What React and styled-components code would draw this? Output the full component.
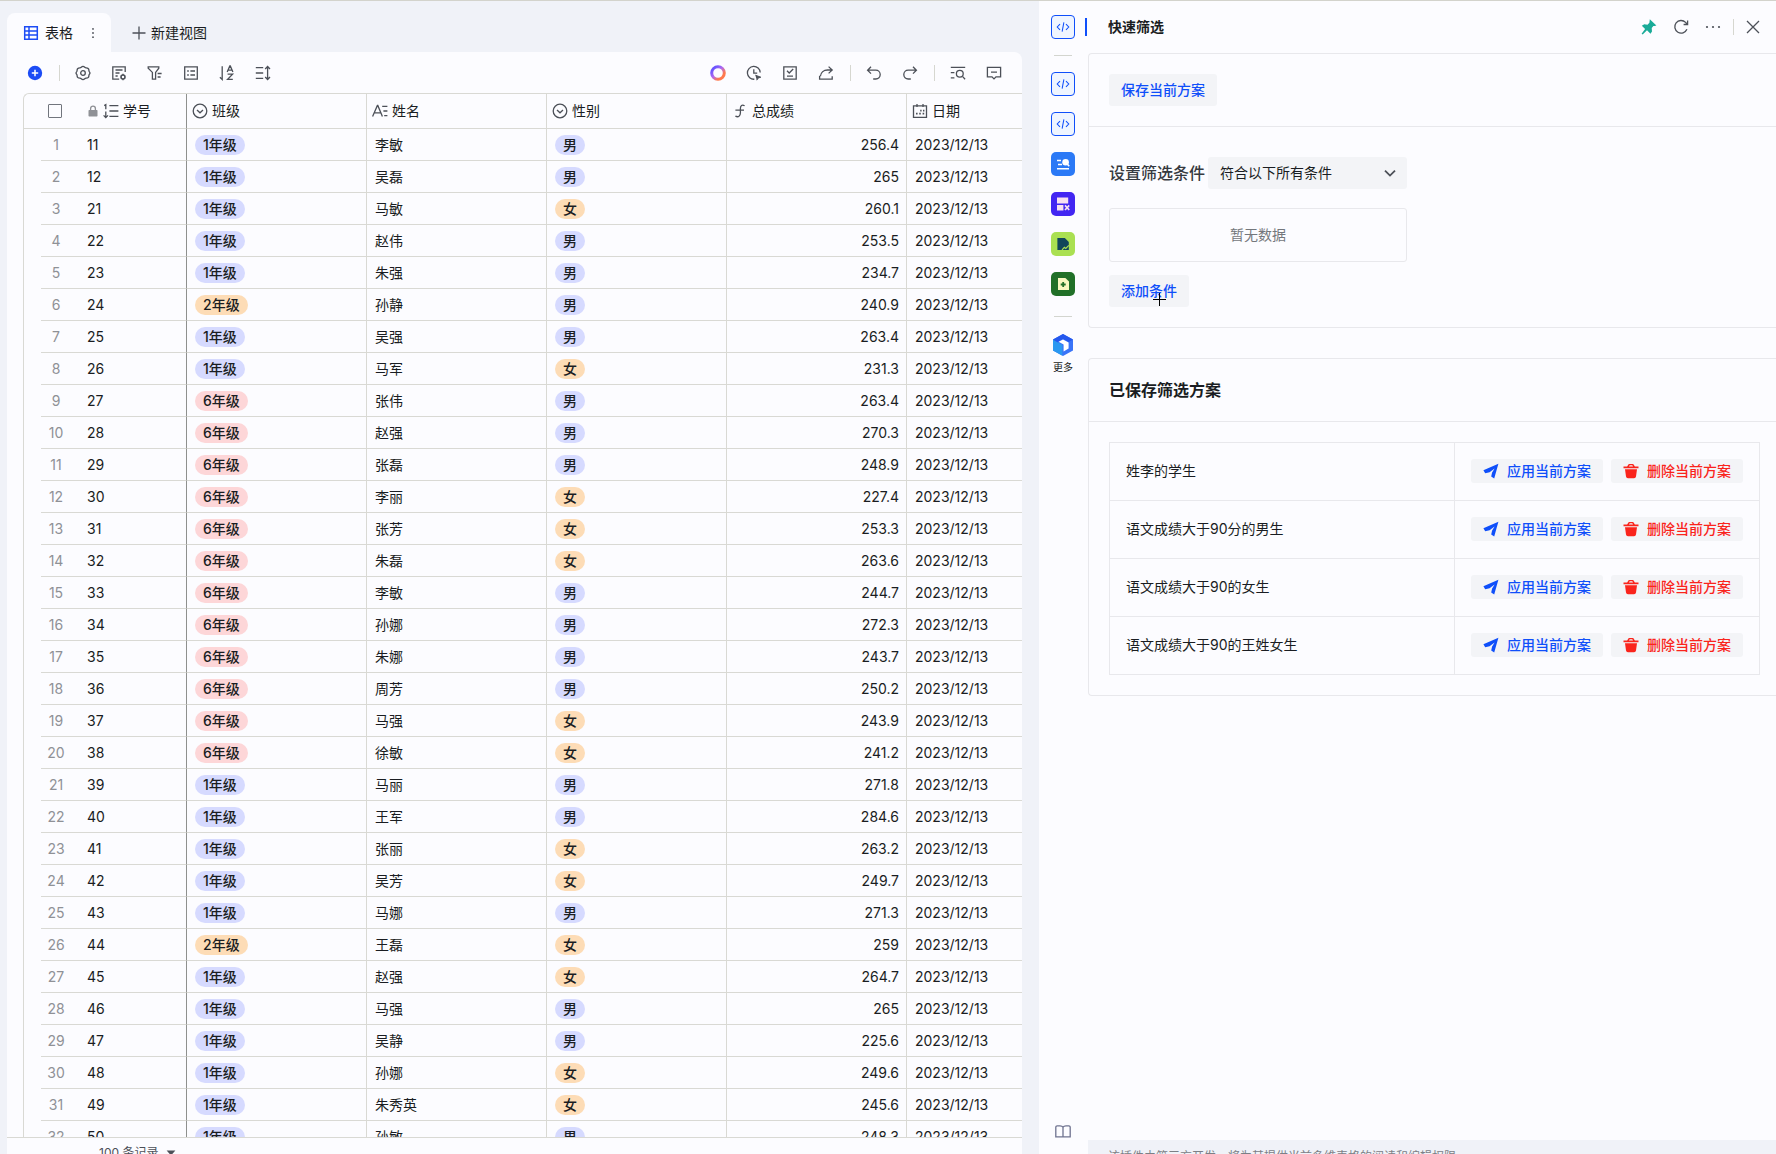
import React from "react";
import styled, { createGlobalStyle } from "styled-components";

const color = {
  surface: "#fcfcff",
  canvas: "#f0f2f8",
  control: "#f3f4f7",
  text: "#1a1d22",
  icon: "#4c5058",
  muted: "#8f9196",
  blue: "#0f4ffa",
  red: "#fa241c",
  grid: "#d9d9d4",
  line: "#e8e8ec",
};

const GlobalStyle = createGlobalStyle`
  * { box-sizing: border-box; }
  body {
    margin: 0;
    color: ${color.text};
    background: ${color.canvas};
    font: 14px/20px Inter, "Noto Sans CJK SC", sans-serif;
  }
  button, select, input { font: inherit; color: inherit; margin: 0; }
  button { border: 0; background: none; padding: 0; cursor: pointer; }
`;

/* ---------- icons ---------- */

const Svg = styled.svg`
  display: block;
  flex: none;
  width: ${(p) => p.$size || 16}px;
  height: ${(p) => p.$size || 16}px;
  fill: none;
  stroke: currentColor;
  stroke-width: ${(p) => p.$weight || 1.3};
  color: ${(p) => p.$color || "inherit"};
`;

const shapes = {
  grid: <path d="M1.7 1.7h12.6v12.6H1.7zM1.7 6h12.6M1.7 10h12.6M6 1.7v12.6" strokeWidth="1.5" />,
  dots: <g fill="currentColor" stroke="none"><circle cx="8" cy="2.5" r="1.2" /><circle cx="8" cy="8" r="1.2" /><circle cx="8" cy="13.5" r="1.2" /></g>,
  more: <g fill="currentColor" stroke="none"><circle cx="2" cy="8" r="1.1" /><circle cx="8" cy="8" r="1.1" /><circle cx="14" cy="8" r="1.1" /></g>,
  plus: <path d="M8 1.5v13M1.5 8h13" />,
  add: <g><circle cx="8" cy="8" r="7.2" fill="#1c4cf5" stroke="none" /><path d="M8 4.8v6.4M4.8 8h6.4" stroke="#fff" strokeWidth="1.5" /></g>,
  gear: <g><path d="M6.300 2.200Q8 .4 9.700 2.200Q10.300 2.900 11.300 2.800Q13.700 2.800 13.900 5Q13.800 6 14.300 6.600Q15.600 8 14.300 9.400Q13.800 10 13.900 11Q13.700 13.200 11.300 13.200Q10.300 13.100 9.700 13.800Q8 15.600 6.300 13.800Q5.700 13.100 4.700 13.200Q2.300 13.200 2.100 11Q2.200 10 1.700 9.400Q.4 8 1.700 6.600Q2.200 6 2.100 5Q2.300 2.800 4.700 2.800Q5.700 2.900 6.300 2.200z" /><circle cx="8" cy="8" r="2.300" /></g>,
  form: <g><path d="M14.2 7V1.8H1.8v12.4h6.4M4.5 5h7M4.5 8h4M4.5 11h2.2" /><circle cx="12" cy="12" r="2" strokeWidth="1.6" /><path d="M12 8.8v1.4M12 13.8v1.4" /></g>,
  filter: <path d="M1.2 1.8h10.6v1.4L8.6 7.4v6.8H5.4V7.4L1.2 3.2zM10.6 8.5h4M10.6 12h3" />,
  list: <path d="M1.7 1.8h12.6v12.4H1.700zM4.2 6h1.6M4.2 10h1.6M7.4 6h4.6M7.4 10h4.6" />,
  sort: <g><path d="M3.2 1.2v13.2L.9 12.2M8.2 7l2.6-6h.5l2.6 6M9 5.2h4M8.6 9.2h5L8.6 14.3h5.2" /></g>,
  height: <path d="M.8 2.6h7.4M.8 8h7.4M.8 13.4h7.4M12.6 1.6v12.8M10.2 4l2.4-2.5L15 4M10.2 12l2.4 2.5L15 12" />,
  clock: <g><path d="M14.200 7.600A6.400 6.400 0 1 0 8.400 14.200M7.800 4.200v4h3.400" /><path d="M9.400 10.200l5.400 2-2.600.8-1.400 2.200" fill="currentColor" strokeWidth="1" /></g>,
  task: <path d="M1.8 1.8h12.4v12.4H1.8zM5 5.8l2.2 2.2L11.2 4M5 11.2h6" />,
  share: <path d="M10.6 1.6l3.6 3.4-3.6 3.4M14 5H9.5C5.8 5 2.7 7.4 2.4 11.3M1.6 10.8v3.4h12.6v-3" />,
  undo: <path d="M5 1.8L1.6 5.2 5 8.6M1.8 5.2h8a4.3 4.3 0 0 1 0 8.8H7.2" />,
  redo: <path d="M11 1.8l3.4 3.4L11 8.6M14.2 5.2h-8a4.3 4.3 0 0 0 0 8.8h2.6" />,
  find: <g><path d="M.8 2.4h14.4M.8 7.6h3.6M.8 12.8h3.6M12.7 11.6l2.4 2.6" /><circle cx="9.8" cy="8.8" r="3.4" /></g>,
  comment: <path d="M1.4 2.4h13.2v9.400H10L8 13.9l-2-2.1H1.4zM5 7.2h6" />,
  lock: <g><rect x="2" y="6.600" width="12" height="8.600" rx="1" fill="currentColor" stroke="none" /><path d="M4.8 7V4.6a3.2 3.2 0 0 1 6.4 0V7" strokeWidth="1.8" /></g>,
  numbered: <path d="M1.2 2.6l1.6-1v4.6M2.8 8.4v6M.6 12.4l2.2 2.2L5 12.4M6.4 2.6h9M6.4 8h9M6.4 13.4h9" />,
  select: <g><circle cx="8" cy="8" r="6.8" /><path d="M5 7l3 2.8L11 7" /></g>,
  text: <path d="M.6 13.6L5.4 2.4h.4l4.6 11.2M2.2 9.8h6.600M10.2 3.4h5.2M11.4 8h4M12.2 12.6h3.2" />,
  formula: <path d="M12.600 2.800c-2.600-1.800-4.200 0-4.200 2.600v4.400c0 3.400-2 4.800-5 3.400M3.400 7.200h8.600" />,
  calendar: <g><path d="M1.5 2.800h13v11.600h-13zM5 1v3M11 1v3" /><path d="M8.2 7.6h1.4M11 7.6h1.4M4 10.6h1.6M7.2 10.6h1.6M10.6 10.6h1.6" strokeWidth="1.7" /></g>,
  code: <path d="M4.6 4.6L1.4 8l3.2 3.4M11.4 4.6L14.6 8l-3.2 3.4M9 2.8L7 13.2" strokeWidth="1.2" />,
  pin: <path d="M8.800.2l6.600 6.400-1.900.5-1.100-.1-1.700 1.900.3 3.600-1.500 2.300-3.500-3.500L1.700 15.600l-1.100-.9 3.500-4.600L.8 6.700l2.500-1.500 3.200.6 1.900-2z" fill="currentColor" stroke="none" />,
  refresh: <path d="M13.9 10.2A6.3 6.3 0 1 1 12.6 3.4l1.6 1.8M14.6 1.6v3.9h-4" />,
  close: <path d="M2 2l12 12M14 2L2 14" />,
  chevron: <path d="M3 5.6L8 10.6l5-5" strokeWidth="1.8" />,
  send: <path d="M15.400.8L11.200 15.600l-3-2 .9-4.200 2.500-4L6.600 9.200 2.200 10.200.4 7.200z" fill="currentColor" stroke="none" />,
  trash: <g fill="currentColor" stroke="none"><path d="M2 6.300h12l-1 7.300a2 2 0 0 1-2 1.700H5a2 2 0 0 1-2-1.700z" /><path d="M.5 3.400h3.600L5.800 1h4.400l1.700 2.400h3.600v1.900H.5zM6 3.400h4L9.300 2.300H6.700z" fillRule="evenodd" /></g>,
  book: <path d="M8 3.2C7.4 2.2 6.4 1.8 5 1.8H2.2c-.8 0-1.4.5-1.4 1.4v9.6h7.2h7.2V3.2c0-.9-.6-1.4-1.4-1.4H11c-1.4 0-2.400.4-3 1.4zM8 3.2v10.4" />,
  caret: <path d="M1 4h14l-7 8z" fill="currentColor" stroke="none" />,
  cross: <path d="M8 1.5v13M1.5 8h13" stroke="#000" strokeWidth="1" shapeRendering="crispEdges" />,
};

const Icon = ({ name, size, tone, weight }) => (
  <Svg viewBox="0 0 16 16" $size={size} $color={tone} $weight={weight} aria-hidden="true">
    {shapes[name]}
  </Svg>
);

const pluginArt = {
  search: (
    <g>
      <rect width="24" height="24" rx="5" fill="#2b79f6" />
      <path d="M6 8.400h4M7 12.400h4M6 16.800h12" stroke="#fff" strokeWidth="1.500" />
      <circle cx="14.600" cy="10.200" r="3.300" fill="#fff" />
      <path d="M16.200 12l2 2.200" stroke="#fff" strokeWidth="1.600" />
    </g>
  ),
  layout: (
    <g>
      <rect width="24" height="24" rx="5" fill="#4226f2" />
      <path d="M6 5.400h11.200v6H6zM6 13h6.400v5.600H6z" fill="#f7e0f0" />
      <path d="M14 13.400l4.200 4.600M18.200 13.400L14 18" stroke="#f7e0f0" strokeWidth="1.600" />
    </g>
  ),
  report: (
    <g>
      <rect width="24" height="24" rx="5" fill="#aae052" />
      <path d="M6.400 6h7.400l4 4v8H6.400z" fill="#10465a" />
      <path d="M11 17.800l2.400-2.400 1.400 1 3-3" stroke="#aae052" strokeWidth="1.200" />
    </g>
  ),
  document: (
    <g>
      <rect width="24" height="24" rx="5" fill="#217028" />
      <path d="M7 6h7.400L18 9.600V18H7z" fill="#f7f8c0" />
      <path d="M12.200 10v5M9.700 12.500h5" stroke="#217028" strokeWidth="1.800" />
    </g>
  ),
};

const PluginIcon = ({ name }) => (
  <Svg viewBox="0 0 24 24" $size={24} aria-hidden="true">
    <g stroke="none">{pluginArt[name]}</g>
  </Svg>
);

const RingIcon = () => (
  <Svg viewBox="0 0 16 16" $size={16} aria-hidden="true">
    <defs>
      <linearGradient id="ring" x1="0" y1="0" x2="1" y2="1">
        <stop offset="0.15" stopColor="#6a55ff" />
        <stop offset="0.45" stopColor="#b06af0" />
        <stop offset="0.75" stopColor="#ff7a4d" />
      </linearGradient>
    </defs>
    <circle cx="8" cy="8" r="6.300" stroke="url(#ring)" strokeWidth="3" />
  </Svg>
);

const HexLogo = () => (
  <Svg viewBox="0 0 24 24" $size={24} aria-hidden="true">
    <g stroke="none">
      <path d="M12 1l10 5.600v11L12 23 2 17.600V6.600z" fill="#3a74f8" />
      <path d="M2 6.600l9.400 5.400v10.700L2 17.600z" fill="#2a98f0" />
      <path d="M2 6.600L12 1l10 5.600-4.400 2.400L12 6 6.400 9.200z" fill="#2558ee" />
      <path d="M7.600 8.800L12 6.400l5.600 3.100v6L12.600 18.600v-7z" fill="#fff" />
    </g>
  </Svg>
);

/* ---------- page frame ---------- */

const Page = styled.div`
  display: flex;
  height: 100vh;
  overflow: hidden;
  border-top: 1px solid #d3d3cc;
`;

const Main = styled.main`
  flex: 1;
  min-width: 0;
  display: flex;
  flex-direction: column;
  padding: 12px 17px 0 7px;
`;

const ViewTabs = styled.nav`
  display: flex;
  flex: none;
  height: 39px;
`;

const ActiveTab = styled.div`
  display: flex;
  align-items: center;
  padding: 0 12px 0 16px;
  border-radius: 8px 8px 0 0;
  background: ${color.surface};
`;

const TabName = styled.button`
  display: flex;
  align-items: center;
  gap: 6px;
`;

const TabMenu = styled.button`
  margin-left: 14px;
  color: ${color.icon};
`;

const NewView = styled.button`
  display: flex;
  align-items: center;
  gap: 4px;
  margin-left: 20px;
`;

const View = styled.section`
  flex: 1;
  min-height: 0;
  display: flex;
  flex-direction: column;
  border-radius: 0 8px 0 0;
  background: ${color.surface};
`;

const Toolbar = styled.div`
  display: flex;
  flex: none;
  align-items: center;
  justify-content: space-between;
  height: 41px;
  padding: 0 16px;
`;

const ToolGroup = styled.div`
  display: flex;
  align-items: center;
  gap: 12px;
`;

const ToolButton = styled.button`
  display: grid;
  place-items: center;
  width: 24px;
  height: 24px;
  color: ${color.icon};
`;

const Divider = styled.span`
  width: 1px;
  height: 16px;
  margin-right: -1px;
  background: #d6d7d0;
`;

const GridFrame = styled.div`
  flex: 1;
  min-height: 0;
  overflow: hidden;
  margin-left: 16px;
  border: solid ${color.grid};
  border-width: 1px 0 0 1px;
  border-radius: 6px 0 0 0;
`;

const DataTable = styled.table`
  width: 100%;
  table-layout: fixed;
  border-collapse: separate;
  border-spacing: 0;
`;

const Col = styled.col`
  width: ${(p) => (p.$width ? `${p.$width}px` : "auto")};
`;

const HeadCell = styled.th`
  height: 35px;
  padding: 0 0 0 ${(p) => p.$inset || 0}px;
  font-weight: 400;
  text-align: left;
  border-bottom: 1px solid ${color.grid};
  border-right: ${(p) => (p.$edge ? `1px solid ${p.$edge}` : 0)};
`;

const HeadLabel = styled.span`
  display: flex;
  align-items: center;
  gap: 4px;
`;

const Cell = styled.td`
  height: 32px;
  padding: 0 ${(p) => (p.$align ? 7 : 8)}px 0 ${(p) => p.$inset || 8}px;
  text-align: ${(p) => p.$align || "left"};
  white-space: nowrap;
  border-bottom: 1px solid ${color.grid};
  border-right: ${(p) => (p.$edge ? `1px solid ${p.$edge}` : 0)};
`;

const IndentCell = styled.td`
  padding: 0;
`;

const IndexCell = styled(Cell)`
  padding: 0;
  text-align: center;
  color: ${color.muted};
`;

const tones = { blue: "#d6daff", orange: "#fddcb6", red: "#fdd6d8" };

const Tag = styled.span`
  display: inline-block;
  height: 20px;
  padding: 0 8px;
  border-radius: 10px;
  font-weight: 500;
  line-height: 20px;
  vertical-align: middle;
  background: ${(p) => tones[p.$tone]};
`;

const CheckBox = styled.input`
  appearance: none;
  width: 14px;
  height: 14px;
  border: 1px solid #71757d;
  border-radius: 1px;
`;

const RecordBar = styled.footer`
  flex: none;
  height: 17px;
  padding-left: 92px;
  overflow: hidden;
  border-top: 1px solid ${color.grid};
`;

const RecordCount = styled.button`
  display: flex;
  align-items: center;
  gap: 8px;
  font-size: 12px;
  line-height: 30px;
  color: ${color.icon};
`;

/* ---------- plugin side bar ---------- */

const Side = styled.aside`
  display: flex;
  flex: none;
  width: 737px;
  background: ${color.surface};
`;

const Rail = styled.nav`
  display: flex;
  flex: none;
  flex-direction: column;
  align-items: center;
  gap: 16px;
  width: 49px;
  padding: 14px 1px 14px 0;
`;

const RailButton = styled.button`
  position: relative;
  display: grid;
  place-items: center;
  width: 24px;
  height: 24px;
`;

const CodeButton = styled(RailButton)`
  border: 1px solid ${color.blue};
  border-radius: 4px;
  color: ${color.blue};
  background: #eff5ff;

  &[aria-current="true"]::after {
    content: "";
    position: absolute;
    top: 2px;
    right: -13px;
    width: 2px;
    height: 18px;
    background: ${color.blue};
  }
`;

const RailLine = styled.span`
  flex: none;
  width: 18px;
  height: 1px;
  margin-top: ${(p) => (p.$spaced ? 4 : 0)}px;
  background: #d3d5cf;
`;

const MoreButton = styled.button`
  display: grid;
  justify-items: center;
  gap: 4px;
  font-size: 10px;
  line-height: 12px;
`;

const HelpButton = styled.button`
  margin-top: auto;
  color: #6f7390;
`;

const Panel = styled.section`
  flex: 1;
  min-width: 0;
  display: flex;
  flex-direction: column;
`;

const PanelHeader = styled.header`
  display: flex;
  flex: none;
  align-items: center;
  justify-content: space-between;
  height: 52px;
  padding: 0 11px 0 20px;
`;

const PanelTitle = styled.h1`
  margin: 0;
  font-size: 14px;
  font-weight: 600;
`;

const PanelActions = styled.div`
  display: flex;
  align-items: center;
  gap: 8px;
`;

const PanelBody = styled.div`
  flex: 1;
  min-height: 0;
  overflow: hidden;
`;

const Card = styled.section`
  margin-bottom: 30px;
  border: 1px solid ${color.line};
  border-right: 0;
  border-radius: 4px 0 0 4px;
`;

const CardHeader = styled.div`
  display: flex;
  align-items: center;
  min-height: ${(p) => (p.$tall ? 73 : 63)}px;
  padding: 0 16px 0 20px;
  border-bottom: 1px solid ${color.line};
`;

const CardTitle = styled.h2`
  margin: 0;
  font-size: 16px;
  font-weight: 600;
`;

const CardBody = styled.div`
  padding: ${(p) => (p.$top ? p.$top : 20)}px 16px 20px 20px;
`;

const ActionButton = styled.button`
  display: inline-flex;
  align-items: center;
  gap: 8px;
  height: ${(p) => (p.$small ? 24 : 32)}px;
  padding: 0 12px;
  border-radius: 3px;
  font-weight: 500;
  white-space: nowrap;
  color: ${(p) => (p.$danger ? color.red : color.blue)};
  background: ${color.control};
`;

const ConditionRow = styled.div`
  display: flex;
  align-items: center;
  gap: 3px;
`;

const ConditionLabel = styled.label`
  font-size: 16px;
  font-weight: 500;
  color: #363a40;
`;

const SelectWrap = styled.span`
  position: relative;
  width: 199px;
  color: ${color.icon};

  svg {
    position: absolute;
    top: 8px;
    right: 9px;
    pointer-events: none;
  }
`;

const Select = styled.select`
  appearance: none;
  width: 100%;
  height: 32px;
  padding: 0 32px 0 12px;
  border: 0;
  border-radius: 3px;
  color: ${color.text};
  background: ${color.control};
`;

const EmptyBox = styled.div`
  display: grid;
  place-items: center;
  width: 298px;
  height: 54px;
  margin: 19px 0 13px;
  border: 1px solid ${color.line};
  border-radius: 3px;
  color: #74777c;
`;

const CursorAnchor = styled.span`
  position: relative;
  display: inline-flex;

  > svg {
    position: absolute;
    top: 16px;
    left: 42px;
  }
`;

const PlanTable = styled.table`
  width: 100%;
  border-collapse: collapse;
`;

const PlanName = styled.td`
  height: 58px;
  padding: 0 16px 2px;
  border: 1px solid ${color.line};
`;

const PlanActions = styled.td`
  width: 305px;
  padding: 0 16px 2px;
  border: 1px solid ${color.line};
`;

const ButtonPair = styled.div`
  display: flex;
  gap: 8px;
`;

const Notice = styled.footer`
  flex: none;
  height: 14px;
  padding: 8px 0 0 20px;
  overflow: hidden;
  font-size: 12px;
  line-height: 18px;
  color: #7c8086;
  background: ${color.canvas};
`;

/* ---------- data ---------- */

const records = [
  ["11", "1年级", "李敏", "男", "256.4"],
  ["12", "1年级", "吴磊", "男", "265"],
  ["21", "1年级", "马敏", "女", "260.1"],
  ["22", "1年级", "赵伟", "男", "253.5"],
  ["23", "1年级", "朱强", "男", "234.7"],
  ["24", "2年级", "孙静", "男", "240.9"],
  ["25", "1年级", "吴强", "男", "263.4"],
  ["26", "1年级", "马军", "女", "231.3"],
  ["27", "6年级", "张伟", "男", "263.4"],
  ["28", "6年级", "赵强", "男", "270.3"],
  ["29", "6年级", "张磊", "男", "248.9"],
  ["30", "6年级", "李丽", "女", "227.4"],
  ["31", "6年级", "张芳", "女", "253.3"],
  ["32", "6年级", "朱磊", "女", "263.6"],
  ["33", "6年级", "李敏", "男", "244.7"],
  ["34", "6年级", "孙娜", "男", "272.3"],
  ["35", "6年级", "朱娜", "男", "243.7"],
  ["36", "6年级", "周芳", "男", "250.2"],
  ["37", "6年级", "马强", "女", "243.9"],
  ["38", "6年级", "徐敏", "女", "241.2"],
  ["39", "1年级", "马丽", "男", "271.8"],
  ["40", "1年级", "王军", "男", "284.6"],
  ["41", "1年级", "张丽", "女", "263.2"],
  ["42", "1年级", "吴芳", "女", "249.7"],
  ["43", "1年级", "马娜", "男", "271.3"],
  ["44", "2年级", "王磊", "女", "259"],
  ["45", "1年级", "赵强", "女", "264.7"],
  ["46", "1年级", "马强", "男", "265"],
  ["47", "1年级", "吴静", "男", "225.6"],
  ["48", "1年级", "孙娜", "女", "249.6"],
  ["49", "1年级", "朱秀英", "女", "245.6"],
  ["50", "1年级", "孙敏", "男", "248.3"],
];

const gradeTone = { "1年级": "blue", "2年级": "orange", "6年级": "red" };

const fields = [
  ["select", "班级"],
  ["text", "姓名"],
  ["select", "性别"],
  ["formula", "总成绩"],
  ["calendar", "日期"],
];

const plans = ["姓李的学生", "语文成绩大于90分的男生", "语文成绩大于90的女生", "语文成绩大于90的王姓女生"];

const Tool = ({ name, label }) => (
  <ToolButton aria-label={label}>
    <Icon name={name} />
  </ToolButton>
);

const frozenEdge = "#8e908e";

function RecordGrid() {
  return (
    <GridFrame>
      <DataTable>
        <colgroup>
          <Col $width={17} />
          <Col $width={30} />
          <Col $width={116} />
          <Col $width={180} />
          <Col $width={180} />
          <Col $width={180} />
          <Col $width={180} />
          <Col />
        </colgroup>
        <thead>
          <tr>
            <HeadCell />
            <HeadCell $inset={7}>
              <HeadLabel>
                <CheckBox type="checkbox" aria-label="全选" />
              </HeadLabel>
            </HeadCell>
            <HeadCell $inset={16} $edge={frozenEdge}>
              <HeadLabel>
                <Icon name="lock" size={12} tone={color.muted} />
                <Icon name="numbered" tone={color.icon} />
                学号
              </HeadLabel>
            </HeadCell>
            {fields.map(([icon, label], i) => (
              <HeadCell key={label} $inset={5} $edge={i < 4 ? color.grid : null}>
                <HeadLabel>
                  <Icon name={icon} tone={color.icon} />
                  {label}
                </HeadLabel>
              </HeadCell>
            ))}
          </tr>
        </thead>
        <tbody>
          {records.map(([id, grade, name, gender, score], i) => (
            <tr key={id}>
              <IndentCell />
              <IndexCell>{i + 1}</IndexCell>
              <Cell $inset={16} $edge={frozenEdge}>{id}</Cell>
              <Cell $edge={color.grid}><Tag $tone={gradeTone[grade]}>{grade}</Tag></Cell>
              <Cell $edge={color.grid}>{name}</Cell>
              <Cell $edge={color.grid}><Tag $tone={gender === "男" ? "blue" : "orange"}>{gender}</Tag></Cell>
              <Cell $edge={color.grid} $align="right">{score}</Cell>
              <Cell>2023/12/13</Cell>
            </tr>
          ))}
        </tbody>
      </DataTable>
    </GridFrame>
  );
}

function FilterPanel() {
  return (
    <Panel>
      <PanelHeader>
        <PanelTitle>快速筛选</PanelTitle>
        <PanelActions>
          <ToolButton aria-label="固定"><Icon name="pin" tone="#1aab98" /></ToolButton>
          <Tool name="refresh" label="刷新" />
          <Tool name="more" label="更多操作" />
          <Divider />
          <Tool name="close" label="关闭" />
        </PanelActions>
      </PanelHeader>
      <PanelBody>
        <Card>
          <CardHeader $tall>
            <ActionButton>保存当前方案</ActionButton>
          </CardHeader>
          <CardBody $top={30}>
            <ConditionRow>
              <ConditionLabel htmlFor="match">设置筛选条件</ConditionLabel>
              <SelectWrap>
                <Select id="match" defaultValue="all">
                  <option value="all">符合以下所有条件</option>
                </Select>
                <Icon name="chevron" />
              </SelectWrap>
            </ConditionRow>
            <EmptyBox>暂无数据</EmptyBox>
            <CursorAnchor>
              <ActionButton>添加条件</ActionButton>
              <Icon name="cross" />
            </CursorAnchor>
          </CardBody>
        </Card>
        <Card>
          <CardHeader>
            <CardTitle>已保存筛选方案</CardTitle>
          </CardHeader>
          <CardBody>
            <PlanTable>
              <tbody>
                {plans.map((plan) => (
                  <tr key={plan}>
                    <PlanName>{plan}</PlanName>
                    <PlanActions>
                      <ButtonPair>
                        <ActionButton $small>
                          <Icon name="send" />
                          应用当前方案
                        </ActionButton>
                        <ActionButton $small $danger>
                          <Icon name="trash" />
                          删除当前方案
                        </ActionButton>
                      </ButtonPair>
                    </PlanActions>
                  </tr>
                ))}
              </tbody>
            </PlanTable>
          </CardBody>
        </Card>
      </PanelBody>
      <Notice>该插件由第三方开发，将为其提供当前多维表格的阅读和编辑权限</Notice>
    </Panel>
  );
}

export default function App() {
  return (
    <>
      <GlobalStyle />
      <Page>
        <Main>
          <ViewTabs>
            <ActiveTab>
              <TabName>
                <Icon name="grid" tone="#1c4cf5" />
                表格
              </TabName>
              <TabMenu aria-label="视图菜单"><Icon name="dots" size={12} /></TabMenu>
            </ActiveTab>
            <NewView>
              <Icon name="plus" tone={color.icon} />
              新建视图
            </NewView>
          </ViewTabs>
          <View>
            <Toolbar>
              <ToolGroup>
                <Tool name="add" label="添加记录" />
                <Divider />
                <Tool name="gear" label="字段配置" />
                <Tool name="form" label="视图配置" />
                <Tool name="filter" label="筛选" />
                <Tool name="list" label="分组" />
                <Tool name="sort" label="排序" />
                <Tool name="height" label="行高" />
              </ToolGroup>
              <ToolGroup>
                <ToolButton aria-label="智能助手"><RingIcon /></ToolButton>
                <Tool name="clock" label="提醒" />
                <Tool name="task" label="生成表单" />
                <Tool name="share" label="分享视图" />
                <Divider />
                <Tool name="undo" label="撤销" />
                <Tool name="redo" label="重做" />
                <Divider />
                <Tool name="find" label="查找" />
                <Tool name="comment" label="评论" />
              </ToolGroup>
            </Toolbar>
            <RecordGrid />
            <RecordBar>
              <RecordCount>
                100 条记录
                <Icon name="caret" size={10} />
              </RecordCount>
            </RecordBar>
          </View>
        </Main>
        <Side>
          <Rail>
            <CodeButton aria-label="快速筛选" aria-current="true"><Icon name="code" size={14} /></CodeButton>
            <RailLine />
            <CodeButton aria-label="脚本一"><Icon name="code" size={14} /></CodeButton>
            <CodeButton aria-label="脚本二"><Icon name="code" size={14} /></CodeButton>
            <RailButton aria-label="查找替换"><PluginIcon name="search" /></RailButton>
            <RailButton aria-label="布局"><PluginIcon name="layout" /></RailButton>
            <RailButton aria-label="报表"><PluginIcon name="report" /></RailButton>
            <RailButton aria-label="文档"><PluginIcon name="document" /></RailButton>
            <RailLine $spaced />
            <MoreButton>
              <HexLogo />
              更多
            </MoreButton>
            <HelpButton aria-label="帮助"><Icon name="book" /></HelpButton>
          </Rail>
          <FilterPanel />
        </Side>
      </Page>
    </>
  );
}
